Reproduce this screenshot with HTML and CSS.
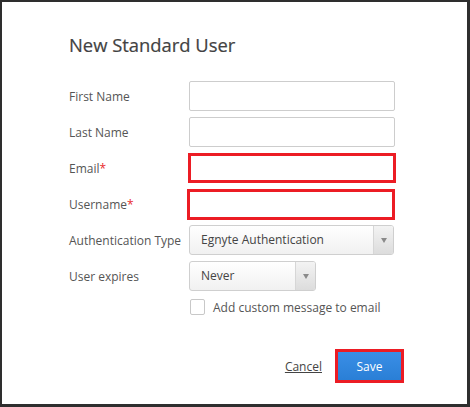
FILE: index.html
```html
<!DOCTYPE html>
<html>
<head>
<meta charset="utf-8">
<link rel="stylesheet" href="styles.css">
</head>
<body>
<div class="frame">
  <h1 class="title">New Standard User</h1>
  <form class="form">
    <div class="row">
      <label class="label">First Name</label>
      <input class="input" type="text">
    </div>
    <div class="row">
      <label class="label">Last Name</label>
      <input class="input" type="text">
    </div>
    <div class="row">
      <label class="label">Email<span class="req">*</span></label>
      <input class="input input-hl" type="text">
    </div>
    <div class="row">
      <label class="label">Username<span class="req">*</span></label>
      <input class="input input-hl input-hl2" type="text">
    </div>
    <div class="row">
      <label class="label">Authentication Type</label>
      <div class="select select-wide">
        <span class="select-text">Egnyte Authentication</span>
        <span class="select-arrow"><span class="tri"></span></span>
      </div>
    </div>
    <div class="row">
      <label class="label">User expires</label>
      <div class="select select-narrow">
        <span class="select-text">Never</span>
        <span class="select-arrow"><span class="tri"></span></span>
      </div>
    </div>
    <div class="row row-check">
      <span class="label"></span>
      <span class="checkbox"></span>
      <span class="check-label">Add custom message to email</span>
    </div>
    <div class="actions">
      <a class="cancel" href="#">Cancel</a>
      <span class="save-hl"><button class="save" type="button">Save</button></span>
    </div>
  </form>
</div>
</body>
</html>
```
FILE: styles.css
```css
* { box-sizing: border-box; }
html, body { margin: 0; padding: 0; background: #fff; }
body { font-family: "Open Sans", "Liberation Sans", sans-serif; }
.frame {
  width: 470px;
  height: 407px;
  border-style: solid;
  border-color: #2e2e2e;
  border-width: 2px 3px 3px 2px;
  padding: 0 0 0 67px;
}
.title {
  margin: 0;
  padding-top: 30px;
  height: 79px;
  font-size: 18.4px;
  font-weight: 400;
  color: #424242;
  line-height: 26px;
  -webkit-text-stroke: 0.2px #424242;
}
.form { display: flex; flex-direction: column; }
.row {
  display: flex;
  align-items: center;
  height: 30px;
  margin-bottom: 6px;
}
.label {
  width: 120px;
  flex: none;
  font-size: 12px;
  color: #555;
}
.req { color: #e8282b; }
.input {
  width: 206px;
  height: 30px;
  border: 1px solid #cdcdcd;
  border-radius: 2px;
  background: #fff;
  padding: 0 8px;
  margin: 0;
  font: inherit;
}
.input-hl {
  border: 3px solid #ec1c24;
  border-radius: 0;
  width: 208px;
  height: 30px;
  margin-left: -1px;
}
.input-hl2 { margin-left: -2px; height: 31px; }
.select {
  display: flex;
  height: 30px;
  border: 1px solid #cfcfcf;
  border-radius: 3px;
  background: linear-gradient(#ffffff, #f1f1f1);
  overflow: hidden;
}
.select-wide { width: 205px; }
.select-narrow { width: 127px; }
.select-text {
  flex: 1;
  padding-left: 11px;
  font-size: 12px;
  line-height: 28px;
  color: #444;
}
.select-arrow {
  width: 20px;
  border-left: 1px solid #d6d6d6;
  background: linear-gradient(#f3f3f3, #dcdcdc);
  display: flex;
  align-items: center;
  justify-content: center;
}
.tri {
  width: 0;
  height: 0;
  border-left: 3px solid transparent;
  border-right: 3px solid transparent;
  border-top: 5px solid #8a8a8a;
}
.row-check { height: 20px; margin-top: 0; }
.checkbox {
  width: 15px;
  height: 16px;
  margin-left: 1px;
  border: 1px solid #c8c8c8;
  border-radius: 2px;
  background: #fff;
}
.check-label {
  margin-left: 8px;
  font-size: 12px;
  color: #555;
}
.actions {
  display: flex;
  justify-content: flex-end;
  align-items: center;
  padding-right: 63px;
  margin-top: 26px;
}
.cancel {
  font-size: 12px;
  color: #444;
  text-decoration: underline;
  margin-right: 13px;
}
.save-hl {
  display: inline-block;
  border: 3px solid #ec1c24;
}
.save {
  display: block;
  width: 63px;
  height: 28px;
  border: 0;
  margin: 0;
  background: linear-gradient(#3a8ee6, #2a7fd6);
  color: #fff;
  font: inherit;
  font-size: 12px;
  padding: 0;
}
```
